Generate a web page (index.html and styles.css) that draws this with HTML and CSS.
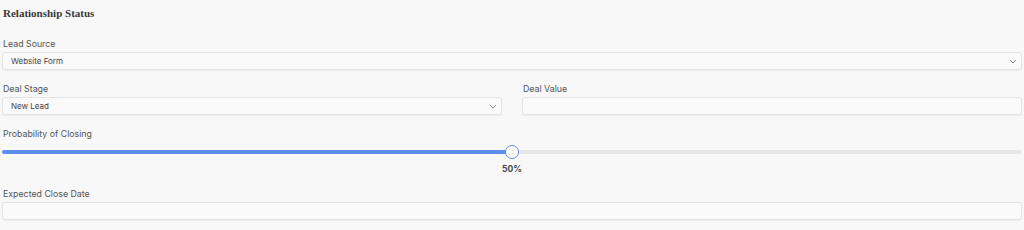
FILE: index.html
```html
<!DOCTYPE html>
<html lang="en">
<head>
  <meta charset="UTF-8">
  <title>Relationship Status</title>
  <link rel="stylesheet" href="styles.css">
</head>
<body>

  <form class="panel">
    <h2>Relationship Status</h2>

    <!-- lead source -->
    <div class="form-group">
      <label>Lead Source</label>
      <div class="select-wrap">
        <select name="leadSource">
          <option>Website Form</option>
          <option>Referral</option>
          <option>Cold Call</option>
        </select>
        <svg class="chevron" width="8" height="5" viewBox="0 0 8 5"><path d="M1 1l3 3 3-3" fill="none" stroke="#888" stroke-width="1"/></svg>
      </div>
    </div>

    <!-- stage + value -->
    <div class="form-row">
      <div class="form-group">
        <label>Deal Stage</label>
        <div class="select-wrap">
          <select name="dealStage">
            <option>New Lead</option>
            <option>Qualified</option>
            <option>Proposal</option>
          </select>
          <svg class="chevron" width="8" height="5" viewBox="0 0 8 5"><path d="M1 1l3 3 3-3" fill="none" stroke="#888" stroke-width="1"/></svg>
        </div>
      </div>
      <div class="form-group">
        <label>Deal Value</label>
        <input type="text" name="dealValue">
      </div>
    </div>

    <!-- probability -->
    <div class="form-group">
      <label>Probability of Closing</label>
      <input class="range" type="range" name="probability" min="0" max="100" value="50">
      <div class="range-value">50%</div>
    </div>

    <div class="form-group">
      <label>Expected Close Date</label>
      <input type="text" name="closeDate">
    </div>
  </form>

</body>
</html>
```

FILE: styles.css
```css
html, body { margin: 0; background: #f8f8f8; }
body { font-family: Inter, "Noto Sans", sans-serif; color: #444; }
.panel { padding: 0 2px; }
h2 { font-family: "Liberation Serif", serif; font-size: 11px; line-height: 16px; margin: 5px 0 17px 1px; color: #3a3a3a; }
.form-group { margin-bottom: 13px; }
.form-row { display: grid; grid-template-columns: 1fr 1fr; gap: 20px; }
label { display: block; font-size: 8.8px; line-height: 12px; margin: 0 0 2px 1px; color: #555; }
input[type="text"], select { display: block; box-sizing: border-box; width: 100%; height: 18px; margin: 0; padding: 0 8px; border: 1px solid #e3e3e3; border-radius: 3px; background: #fafafa; box-shadow: 0 1px 1px rgba(0,0,0,0.05); font-family: inherit; font-size: 8px; color: #444; outline: none; }
select { appearance: none; -webkit-appearance: none; }
.select-wrap { position: relative; }
.chevron { position: absolute; right: 5px; top: 7px; pointer-events: none; }
.range { -webkit-appearance: none; appearance: none; display: block; width: 100%; height: 4px; margin: 10px 0 9px; padding: 0; border-radius: 2px; background: linear-gradient(to right, #5b8def 50%, #e7e7e7 50%); outline: none; }
.range::-webkit-slider-thumb { -webkit-appearance: none; width: 14px; height: 14px; border-radius: 50%; background: #fff; border: 1.5px solid #5b8def; box-sizing: border-box; }
.range-value { text-align: center; font-size: 8.5px; font-weight: bold; line-height: 12px; margin-top: 1px; color: #444; }
```
